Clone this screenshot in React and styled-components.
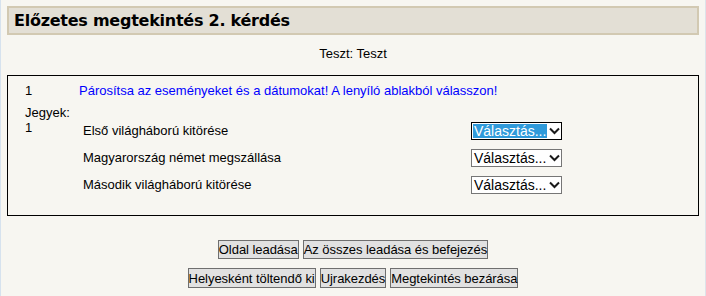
import React from 'react';
import styled, { createGlobalStyle } from 'styled-components';

const GlobalStyle = createGlobalStyle`
  html, body {
    margin: 0;
    padding: 0;
    background: #f7f6f1;
  }
  body {
    font-family: "Liberation Sans", Arial, sans-serif;
    font-size: 13px;
    color: #000;
  }
`;

const Page = styled.div`
  min-height: 296px;
  box-sizing: border-box;
  padding: 6px 6px 8px 6px;
  border-left: 1px solid #d6e2ee;
  border-right: 1px solid #dde3ea;
`;

const Header = styled.h2`
  margin: 0;
  height: 29px;
  box-sizing: border-box;
  padding: 0 5px;
  display: flex;
  align-items: center;
  background: #e3dfd5;
  border: 2px solid #d2c9b2;
  font-family: "DejaVu Sans", Verdana, sans-serif;
  font-weight: bold;
  font-size: 16px;
  letter-spacing: -0.25px;
`;

const Quiz = styled.div`
  text-align: center;
  padding: 11px 0 13px;
  line-height: 16px;
`;

const QuestionBox = styled.div`
  border: 1px solid #000;
  height: 141px;
  box-sizing: border-box;
  padding: 7px 0 0 17px;
  display: flex;
`;

const Info = styled.div`
  width: 54px;
  flex: none;
  line-height: 15px;
`;

const InfoNum = styled.div`
  margin-bottom: 7px;
`;

const Content = styled.div`
  flex: 1;
`;

const QText = styled.div`
  color: #0000ff;
  line-height: 15px;
`;

const Matches = styled.div`
  margin-top: 24px;
  display: grid;
  grid-template-columns: 392px auto;
  grid-auto-rows: 27px;
  justify-content: start;
`;

const Stem = styled.div`
  padding-left: 4px;
  padding-top: 1px;
  line-height: 16px;
`;

const SelectBox = styled.div`
  width: 91px;
  height: 18px;
  box-sizing: border-box;
  overflow: hidden;
  border: 1px solid ${p => (p.focused ? '#000' : '#767676')};
  background: #fff;
  display: flex;
  align-items: center;
  padding-left: 1px;
  gap: 2px;
  font-size: 14px;
  white-space: nowrap;
`;

const SelectText = styled.span`
  line-height: 14px;
  padding: 0 1px;
  background: ${p => (p.focused ? '#2f9ada' : 'transparent')};
  color: ${p => (p.focused ? '#fff' : '#000')};
`;

const Chevron = styled.svg`
  width: 11px;
  height: 8px;
  flex: none;
`;

const Buttons = styled.div`
  display: flex;
  justify-content: center;
  gap: 4px;
  margin-top: ${p => p.top}px;
`;

const Button = styled.button`
  font-family: "Liberation Sans", Arial, sans-serif;
  font-size: 13px;
  height: ${p => p.h}px;
  padding: 0;
  margin: 0;
  background: #e1e1e1;
  border: 1px solid #6f6f6f;
  border-radius: 0;
  color: #000;
  line-height: 15px;
  letter-spacing: -0.05px;
`;

const Select = ({ focused }) => (
  <SelectBox focused={focused}>
    <SelectText focused={focused}>Választás...</SelectText>
    <Chevron viewBox="0 0 11 8">
      <path d="M1 1.5 L5.5 6 L10 1.5" fill="none" stroke="#1a1a1a" strokeWidth="2" />
    </Chevron>
  </SelectBox>
);

const stems = [
  'Első világháború kitörése',
  'Magyarország német megszállása',
  'Második világháború kitörése',
];

export default function App() {
  return (
    <>
      <GlobalStyle />
      <Page>
        <Header>Előzetes megtekintés 2. kérdés</Header>
        <Quiz>Teszt: Teszt</Quiz>
        <QuestionBox>
          <Info>
            <InfoNum>1</InfoNum>
            <div>Jegyek:</div>
            <div>1</div>
          </Info>
          <Content>
            <QText>Párosítsa az eseményeket és a dátumokat! A lenyíló ablakból válasszon!</QText>
            <Matches>
              {stems.map((s, i) => (
                <React.Fragment key={s}>
                  <Stem>{s}</Stem>
                  <Select focused={i === 0} />
                </React.Fragment>
              ))}
            </Matches>
          </Content>
        </QuestionBox>
        <Buttons top={24}>
          <Button h={19}>Oldal leadása</Button>
          <Button h={19}>Az összes leadása és befejezés</Button>
        </Buttons>
        <Buttons top={9}>
          <Button h={20}>Helyesként töltendő ki</Button>
          <Button h={20}>Ujrakezdés</Button>
          <Button h={20}>Megtekintés bezárása</Button>
        </Buttons>
      </Page>
    </>
  );
}
